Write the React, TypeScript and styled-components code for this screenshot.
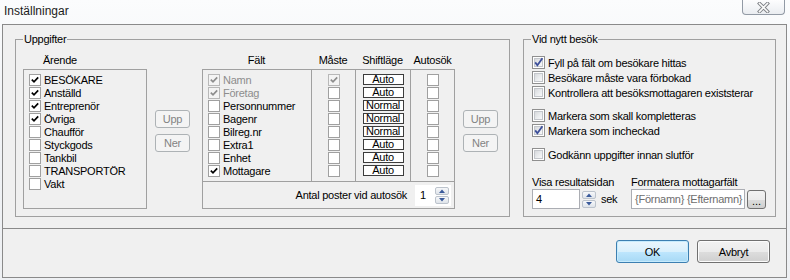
import React from "react";
import styled, { createGlobalStyle, css } from "styled-components";

const GlobalStyle = createGlobalStyle`
    html, body {
        margin: 0;
        padding: 0;
        background: #f3f5f8;
    }
    body {
        font-family: "Liberation Sans", Arial, sans-serif;
        font-size: 11px;
        letter-spacing: -0.25px;
        color: #000;
    }
    * {
        box-sizing: border-box;
    }
`;

const Window = styled.div`
    width: 790px;
    height: 280px;
    overflow: hidden;
    background: linear-gradient(180deg, #fbfcfd 0%, #f1f3f6 40%, #eef0f3 100%);
    display: flex;
    flex-direction: column;
`;

const TitleBar = styled.div`
    height: 24px;
    display: flex;
    justify-content: space-between;
    align-items: flex-start;
    padding: 0 5px 0 4px;
`;

const Title = styled.div`
    font-family: "Liberation Sans", Arial, sans-serif;
    font-size: 12px;
    letter-spacing: 0;
    line-height: 14px;
    padding-top: 4px;
    color: #1b1b1b;
`;

const CloseButton = styled.div`
    width: 43px;
    height: 15px;
    border: 1px solid #929aa5;
    border-top: none;
    border-radius: 0 0 4px 4px;
    background: linear-gradient(180deg, #fdfdfe 0%, #eaedf1 100%);
    display: flex;
    align-items: center;
    justify-content: center;
`;

const Frame = styled.div`
    margin: 0 3px 0 2px;
    height: 254px;
    border: 1px solid #8a8a8a;
    background: #f0f0f0;
    display: flex;
    flex-direction: column;
`;

const Content = styled.div`
    height: 203px;
    display: flex;
    align-items: flex-start;
    gap: 13px;
    padding: 8px 0 0 12px;
`;

const Group = styled.fieldset<{ $w: number }>`
    margin: 0;
    padding: 0;
    min-width: 0;
    width: ${p => p.$w}px;
    height: 184px;
    border: 1px solid #a0a0a0;
`;

const Legend = styled.legend`
    margin-left: 7px;
    padding: 0 1px;
    line-height: 13px;
`;

const TaskBody = styled.div`
    display: flex;
    align-items: flex-start;
    padding: 7px 0 0 7px;
`;

const Column = styled.div<{ $w: number; $ml?: number }>`
    width: ${p => p.$w}px;
    margin-left: ${p => p.$ml || 0}px;
    display: flex;
    flex-direction: column;
    gap: 2px;
`;

const ColumnTitle = styled.div<{ $pl?: number }>`
    height: 14px;
    line-height: 14px;
    padding-left: ${p => p.$pl || 0}px;
`;

const ListBox = styled.div`
    height: 140px;
    border: 1px solid #a0a0a0;
    padding: 3px 0 0 5px;
`;

const Row = styled.div<{ $disabled?: boolean }>`
    height: 13px;
    display: flex;
    align-items: center;
    gap: 3px;
    white-space: nowrap;
    color: ${p => (p.$disabled ? "#8d8d8d" : "#000")};
`;

const MoveButtons = styled.div<{ $ml: number }>`
    margin: 57px 0 0 ${p => p.$ml}px;
    display: flex;
    flex-direction: column;
    gap: 6px;
`;

const DisabledButton = styled.div`
    width: 35px;
    height: 18px;
    border: 1px solid #adb2b5;
    border-radius: 3px;
    background: #f4f4f4;
    color: #838383;
    display: flex;
    align-items: center;
    justify-content: center;
`;

const HeaderGrid = styled.div`
    display: grid;
    grid-template-columns: 109px 44px 55px 45px;
    height: 14px;
    line-height: 14px;
    text-align: center;
`;

const TableBox = styled.div`
    height: 140px;
    border: 1px solid #a0a0a0;
    display: flex;
    flex-direction: column;
`;

const TableCols = styled.div`
    height: 112px;
    display: flex;
    border-bottom: 1px solid #a0a0a0;
`;

const TableCol = styled.div<{ $w: number; $first?: boolean }>`
    width: ${p => p.$w}px;
    padding: 3px 0 0 ${p => (p.$first ? 5 : 0)}px;
    border-left: ${p => (p.$first ? "none" : "1px solid #a0a0a0")};
    display: flex;
    flex-direction: column;
    align-items: ${p => (p.$first ? "stretch" : "center")};
`;

const CellRow = styled.div`
    height: 13px;
    display: flex;
    align-items: center;
    justify-content: center;
`;

const ShiftBox = styled.div`
    width: 41px;
    height: 11px;
    border: 1px solid #3c3c3c;
    background: #fff;
    font-size: 11px;
    line-height: 9px;
    text-align: center;
`;

const TableFooter = styled.div`
    flex: 1;
    display: flex;
    align-items: center;
    justify-content: flex-end;
    gap: 8px;
    padding-right: 3px;
`;

const SpinBox = styled.div<{ $w: number }>`
    width: ${p => p.$w}px;
    height: 21px;
    background: #fff;
    border: 1px solid ${p => (p.$w > 40 ? "#abadb3" : "#fff")};
    display: flex;
    align-items: center;
    justify-content: space-between;
    padding: 0 1px 0 4px;
`;

const SpinArrows = styled.div`
    display: flex;
    flex-direction: column;
    gap: 1px;
`;

const SpinArrow = styled.div`
    width: 14px;
    height: 8px;
    border: 1px solid #bcc3cc;
    border-radius: 2px;
    background: linear-gradient(180deg, #f7f8fa 0%, #dfe4ea 100%);
    display: flex;
    align-items: center;
    justify-content: center;
`;

const VisitBody = styled.div`
    padding: 9px 0 0 8px;
    display: flex;
    flex-direction: column;
`;

const VisitRow = styled.div<{ $mt?: number }>`
    height: 15px;
    margin-top: ${p => p.$mt || 0}px;
    display: flex;
    align-items: center;
    gap: 3px;
    white-space: nowrap;
`;

const FieldGrid = styled.div`
    margin-top: 13px;
    display: grid;
    grid-template-columns: 99px auto;
`;

const FieldLabel = styled.div`
    height: 14px;
    line-height: 14px;
    white-space: nowrap;
`;

const FieldLine = styled.div`
    height: 20px;
    display: flex;
    align-items: center;
`;

const TextBox = styled.div<{ $w: number; $muted?: boolean }>`
    width: ${p => p.$w}px;
    height: 20px;
    border: 1px solid #abadb3;
    background: #fff;
    padding-left: 3px;
    line-height: 18px;
    white-space: nowrap;
    overflow: hidden;
    color: ${p => (p.$muted ? "#6d6d6d" : "#000")};
`;

const SideSpin = styled.div`
    margin-left: 2px;
    display: flex;
    flex-direction: column;
    gap: 1px;
`;

const Unit = styled.span`
    margin-left: 5px;
`;

const DotsButton = styled.div`
    width: 19px;
    height: 19px;
    margin-left: 2px;
    border: 1px solid #707070;
    border-radius: 3px;
    background: linear-gradient(180deg, #f2f2f2 0%, #ebebeb 50%, #dddddd 51%, #cfcfcf 100%);
    text-align: center;
    line-height: 20px;
    letter-spacing: 0;
`;

const ButtonBar = styled.div`
    flex: 1;
    border-top: 1px solid #8a8a8a;
    display: flex;
    justify-content: flex-end;
    align-items: flex-start;
    gap: 8px;
    padding: 11px 16px 0 0;
`;

const DialogButton = styled.div<{ $primary?: boolean; $w: number }>`
    width: ${p => p.$w}px;
    height: 23px;
    border-radius: 3px;
    display: flex;
    align-items: center;
    justify-content: center;
    ${p =>
        p.$primary
            ? css`
                  border: 1px solid #3c7fb1;
                  background: linear-gradient(180deg, #eaf6fd 0%, #d9f0fc 50%, #bee6fd 51%, #a7d9f5 100%);
                  box-shadow: inset 0 0 0 1px #c6ebfd;
              `
            : css`
                  border: 1px solid #707070;
                  background: linear-gradient(180deg, #f2f2f2 0%, #ebebeb 50%, #dddddd 51%, #cfcfcf 100%);
                  box-shadow: inset 0 0 0 1px #fcfcfc;
              `}
`;

const BoxBase = styled.span<{ $size: number }>`
    position: relative;
    flex: none;
    width: ${p => p.$size}px;
    height: ${p => p.$size}px;
    display: inline-block;
`;

const FlatBox = styled(BoxBase)<{ $disabled?: boolean }>`
    border: 1px solid ${p => (p.$disabled ? "#b8b8b8" : "#a0a0a0")};
    background: ${p => (p.$disabled ? "#f4f4f4" : "#fff")};
`;

const AeroBox = styled(BoxBase)`
    border: 1px solid #8f8f8f;
    background: #fff;
    &::before {
        content: "";
        position: absolute;
        inset: 1px;
        border: 1px solid #c3c6cb;
        background: linear-gradient(135deg, #d7d9dc 0%, #eceef0 60%, #f8f8f9 100%);
    }
    svg {
        position: relative;
    }
`;

function Check({ checked, disabled }: { checked?: boolean; disabled?: boolean }) {
    return (
        <FlatBox $size={12} $disabled={disabled}>
            {checked && (
                <svg width="10" height="10" viewBox="0 0 10 10" style={{ display: "block" }}>
                    <path
                        d="M1.8 4.6 L4 6.8 L8.2 2.4"
                        fill="none"
                        stroke={disabled ? "#8d8d8d" : "#000"}
                        strokeWidth="1.7"
                    />
                </svg>
            )}
        </FlatBox>
    );
}

function AeroCheck({ checked }: { checked?: boolean }) {
    return (
        <AeroBox $size={13}>
            {checked && (
                <svg width="11" height="11" viewBox="0 0 11 11" style={{ display: "block" }}>
                    <path d="M2.2 5.4 L4.4 8.3 L9.4 1.2" fill="none" stroke="#3d4f9a" strokeWidth="1.8" />
                </svg>
            )}
        </AeroBox>
    );
}

function Arrow({ up }: { up?: boolean }) {
    return (
        <svg width="6" height="4" viewBox="0 0 6 4">
            <path d={up ? "M0 4 L3 0.5 L6 4 Z" : "M0 0 L3 3.5 L6 0 Z"} fill="#3b5b9b" />
        </svg>
    );
}

const errands = [
    { label: "BESÖKARE", checked: true },
    { label: "Anställd", checked: true },
    { label: "Entreprenör", checked: true },
    { label: "Övriga", checked: true },
    { label: "Chaufför" },
    { label: "Styckgods" },
    { label: "Tankbil" },
    { label: "TRANSPORTÖR" },
    { label: "Vakt" }
];

const fields = [
    { label: "Namn", on: true, disabled: true, must: true, shift: "Auto" },
    { label: "Företag", on: true, disabled: true, shift: "Auto" },
    { label: "Personnummer", shift: "Normal" },
    { label: "Bagenr", shift: "Normal" },
    { label: "Bilreg.nr", shift: "Normal" },
    { label: "Extra1", shift: "Auto" },
    { label: "Enhet", shift: "Auto" },
    { label: "Mottagare", on: true, shift: "Auto" }
];

function App() {
    return (
        <Window>
            <GlobalStyle />
            <TitleBar>
                <Title>Inställningar</Title>
                <CloseButton>
                    <svg width="13" height="11" viewBox="0 0 13 11">
                        <path d="M2.5 1.5 L10.5 9.5 M10.5 1.5 L2.5 9.5" stroke="#7c7f84" strokeWidth="3.4" strokeLinecap="square" />
                        <path d="M2.5 1.5 L10.5 9.5 M10.5 1.5 L2.5 9.5" stroke="#fbfbfb" strokeWidth="1.6" strokeLinecap="square" />
                    </svg>
                </CloseButton>
            </TitleBar>
            <Frame>
                <Content>
                    <Group $w={495}>
                        <Legend>Uppgifter</Legend>
                        <TaskBody>
                            <Column $w={124}>
                                <ColumnTitle $pl={20}>Ärende</ColumnTitle>
                                <ListBox>
                                    {errands.map(e => (
                                        <Row key={e.label}>
                                            <Check checked={e.checked} />
                                            {e.label}
                                        </Row>
                                    ))}
                                </ListBox>
                            </Column>
                            <MoveButtons $ml={8}>
                                <DisabledButton>Upp</DisabledButton>
                                <DisabledButton>Ner</DisabledButton>
                            </MoveButtons>
                            <Column $w={253} $ml={12}>
                                <HeaderGrid>
                                    <span>Fält</span>
                                    <span>Måste</span>
                                    <span>Shiftläge</span>
                                    <span>Autosök</span>
                                </HeaderGrid>
                                <TableBox>
                                    <TableCols>
                                        <TableCol $w={108} $first>
                                            {fields.map(f => (
                                                <Row key={f.label} $disabled={f.disabled}>
                                                    <Check checked={f.on} disabled={f.disabled} />
                                                    {f.label}
                                                </Row>
                                            ))}
                                        </TableCol>
                                        <TableCol $w={44}>
                                            {fields.map(f => (
                                                <CellRow key={f.label}>
                                                    <Check checked={f.must} disabled={f.must} />
                                                </CellRow>
                                            ))}
                                        </TableCol>
                                        <TableCol $w={55}>
                                            {fields.map(f => (
                                                <CellRow key={f.label}>
                                                    <ShiftBox>{f.shift}</ShiftBox>
                                                </CellRow>
                                            ))}
                                        </TableCol>
                                        <TableCol $w={44}>
                                            {fields.map(f => (
                                                <CellRow key={f.label}>
                                                    <Check />
                                                </CellRow>
                                            ))}
                                        </TableCol>
                                    </TableCols>
                                    <TableFooter>
                                        <span>Antal poster vid autosök</span>
                                        <SpinBox $w={36}>
                                            <span>1</span>
                                            <SpinArrows>
                                                <SpinArrow>
                                                    <Arrow up />
                                                </SpinArrow>
                                                <SpinArrow>
                                                    <Arrow />
                                                </SpinArrow>
                                            </SpinArrows>
                                        </SpinBox>
                                    </TableFooter>
                                </TableBox>
                            </Column>
                            <MoveButtons $ml={8}>
                                <DisabledButton>Upp</DisabledButton>
                                <DisabledButton>Ner</DisabledButton>
                            </MoveButtons>
                        </TaskBody>
                    </Group>
                    <Group $w={253}>
                        <Legend>Vid nytt besök</Legend>
                        <VisitBody>
                            <VisitRow>
                                <AeroCheck checked />
                                Fyll på fält om besökare hittas
                            </VisitRow>
                            <VisitRow>
                                <AeroCheck />
                                Besökare måste vara förbokad
                            </VisitRow>
                            <VisitRow>
                                <AeroCheck />
                                Kontrollera att besöksmottagaren existsterar
                            </VisitRow>
                            <VisitRow $mt={8}>
                                <AeroCheck />
                                Markera som skall kompletteras
                            </VisitRow>
                            <VisitRow>
                                <AeroCheck checked />
                                Markera som incheckad
                            </VisitRow>
                            <VisitRow $mt={9}>
                                <AeroCheck />
                                Godkänn uppgifter innan slutför
                            </VisitRow>
                            <FieldGrid>
                                <FieldLabel>Visa resultatsidan</FieldLabel>
                                <FieldLabel>Formatera mottagarfält</FieldLabel>
                                <FieldLine>
                                    <TextBox $w={48}>4</TextBox>
                                    <SideSpin>
                                        <SpinArrow>
                                            <Arrow up />
                                        </SpinArrow>
                                        <SpinArrow>
                                            <Arrow />
                                        </SpinArrow>
                                    </SideSpin>
                                    <Unit>sek</Unit>
                                </FieldLine>
                                <FieldLine>
                                    <TextBox $w={114} $muted>
                                        {"{Förnamn} {Efternamn}"}
                                    </TextBox>
                                    <DotsButton>...</DotsButton>
                                </FieldLine>
                            </FieldGrid>
                        </VisitBody>
                    </Group>
                </Content>
                <ButtonBar>
                    <DialogButton $primary $w={73}>
                        OK
                    </DialogButton>
                    <DialogButton $w={73}>Avbryt</DialogButton>
                </ButtonBar>
            </Frame>
        </Window>
    );
}

export default App;
